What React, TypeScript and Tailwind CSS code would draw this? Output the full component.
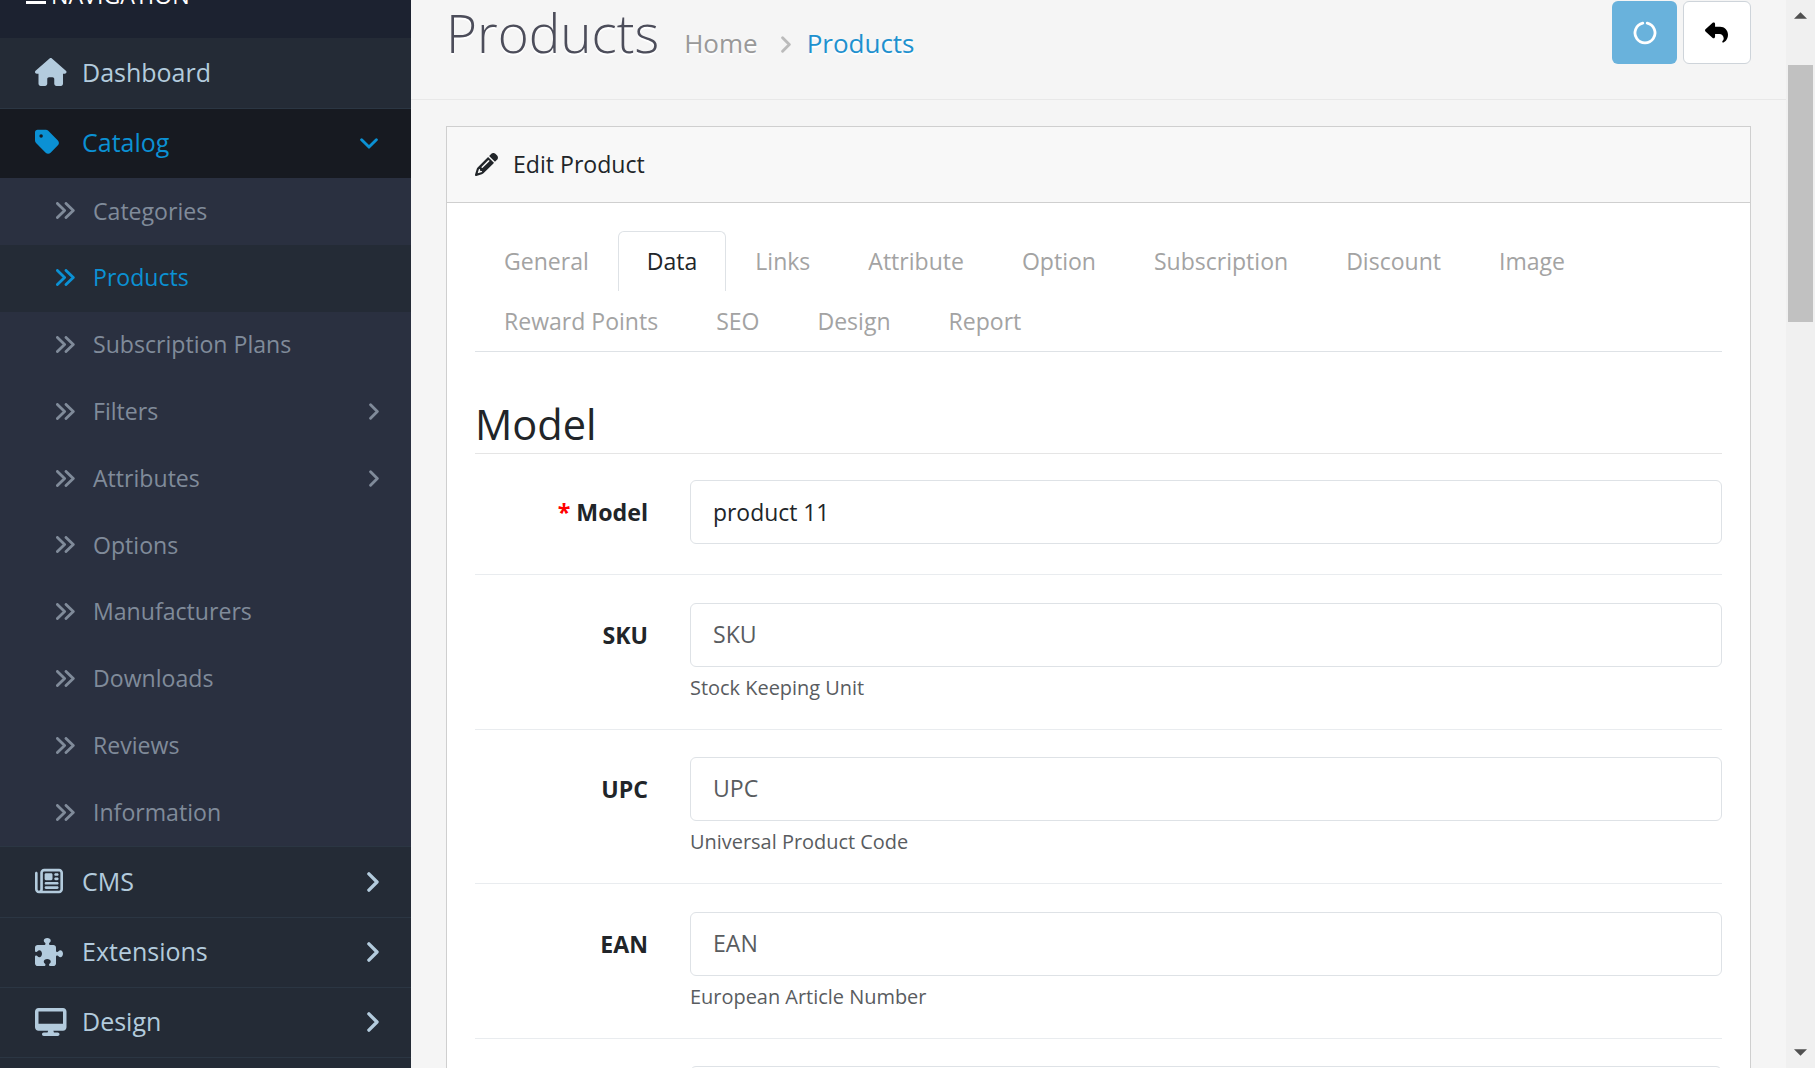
import React from "react";
import { FaHouse, FaTag, FaRegNewspaper, FaPuzzlePiece, FaDesktop, FaPencil, FaReply } from "react-icons/fa6";

function ChevronRight({ className }: { className: string }) {
  return (
    <svg viewBox="0 0 12 20" className={className} fill="none" stroke="currentColor" strokeWidth="3.4" strokeLinejoin="round" strokeLinecap="round">
      <path d="M1.9 1.9 10 10l-8.1 8.1" />
    </svg>
  );
}

function ChevronDown({ className }: { className: string }) {
  return (
    <svg viewBox="0 0 20 12" className={className} fill="none" stroke="currentColor" strokeWidth="3.2" strokeLinejoin="round" strokeLinecap="round">
      <path d="M1.8 1.8 10 10l8.2-8.2" />
    </svg>
  );
}

function DoubleChevron() {
  return (
    <svg viewBox="0 0 19 17" className="h-[17px] w-[19px] shrink-0" fill="none" stroke="currentColor" strokeWidth="2.8" strokeLinejoin="round" strokeLinecap="round">
      <path d="M1.4 1.4 8.6 8.5l-7.2 7.1M10 1.4l7.3 7.1-7.3 7.1" />
    </svg>
  );
}

const children = [
  { label: "Categories" },
  { label: "Products", active: true },
  { label: "Subscription Plans" },
  { label: "Filters", nested: true },
  { label: "Attributes", nested: true },
  { label: "Options" },
  { label: "Manufacturers" },
  { label: "Downloads" },
  { label: "Reviews" },
  { label: "Information" },
];

const tabs = ["General", "Data", "Links", "Attribute", "Option", "Subscription", "Discount", "Image", "Reward Points", "SEO", "Design", "Report"];

const fields = [
  { label: "SKU", help: "Stock Keeping Unit" },
  { label: "UPC", help: "Universal Product Code" },
  { label: "EAN", help: "European Article Number" },
];

const mainRow = "flex items-center border-b border-[#2b3643] pb-[1px] pl-[35px] pr-[32px] text-[25px] text-[#b3cbdd]";

function MainItem({ icon, label, className }: { icon: React.ReactNode; label: string; className: string }) {
  return (
    <li className={className}>
      <span className="-mt-px flex w-[47px] shrink-0">{icon}</span>
      <span className="grow">{label}</span>
      <ChevronRight className="h-[20px] w-[12px]" />
    </li>
  );
}

function Sidebar() {
  return (
    <nav className="flex h-full w-[411px] shrink-0 flex-col overflow-hidden bg-[#242b36]">
      <div className="flex h-[38px] shrink-0 items-start bg-[#1c2230] pl-[26px] text-[23.2px] text-white">
        <span className="mt-px mr-[5px] h-[3px] w-5 bg-white" />
        <span className="-mt-[21px] leading-8">NAVIGATION</span>
      </div>
      <ul className="shrink-0">
        <li className="flex h-[71px] items-center border-b border-[#2b3643] bg-[#242b36] pl-[35px] text-[25px] text-[#b3cbdd]">
          <span className="-mt-[3px] flex w-[47px] shrink-0">
            <FaHouse className="h-[28px] w-[31.5px]" />
          </span>
          Dashboard
        </li>
        <li>
          <div className="flex h-[69px] items-center bg-[#171a21] pb-[1px] pl-[35px] pr-[33px] text-[25px] text-[#0b91d4]">
            <span className="-mt-[3px] flex w-[47px] shrink-0">
              <FaTag className="h-[28px] w-[24.5px]" />
            </span>
            <span className="grow">Catalog</span>
            <ChevronDown className="h-[11px] w-[18px]" />
          </div>
          <ul className="h-[669px] border-b border-[#2b3643] bg-[#2a3040]">
            {children.map((c) => (
              <li
                key={c.label}
                className={
                  "flex h-[66.8px] items-center pb-[1px] pl-[56px] pr-[32px] text-[23.1px] " +
                  (c.active ? "bg-[#242b36] text-[#0b91d4]" : "text-[#808b9a]")
                }
              >
                <DoubleChevron />
                <span className="ml-[18px] grow">{c.label}</span>
                {c.nested && <ChevronRight className="h-[17px] w-[10px]" />}
              </li>
            ))}
          </ul>
        </li>
        <MainItem className={mainRow + " h-[71px]"} icon={<FaRegNewspaper className="size-[28px]" />} label="CMS" />
        <MainItem className={mainRow + " h-[70px]"} icon={<FaPuzzlePiece className="size-[28px]" />} label="Extensions" />
        <MainItem className={mainRow + " h-[70px]"} icon={<FaDesktop className="h-[28px] w-[31.5px]" />} label="Design" />
      </ul>
    </nav>
  );
}

function Header() {
  return (
    <header className="flex h-[100px] shrink-0 items-start border-b border-[#e8e8e8] pl-[35px] pr-[35px] [text-shadow:0_2px_0_#fff]">
      <div className="flex grow items-baseline pt-[3px]">
        <h1 className="text-[53px] leading-[60px] font-light text-[#4c4d5a]">Products</h1>
        <span className="ml-[25px] text-[26px] leading-9 text-[#999]">Home</span>
        <ChevronRight className="mr-[16px] ml-[23px] h-[17px] w-[10px] text-[#bbb]" />
        <span className="text-[26px] leading-9 text-[#1e91cf]">Products</span>
      </div>
      <div className="flex gap-[6px] pt-px">
        <button className="flex h-[63px] w-[65px] items-center justify-center rounded-[6px] bg-[#69b2dc] text-white">
          <svg viewBox="0 0 24 24" className="mt-px ml-px size-6" fill="none" stroke="currentColor" strokeWidth="2.8">
            <path d="M14.2 2.2a10 10 0 1 1-4.4 0" strokeLinecap="round" />
          </svg>
        </button>
        <button className="flex h-[63px] w-[68px] items-center justify-center rounded-[6px] border border-[#ced4da] bg-white pr-[2px] text-black">
          <FaReply className="size-[23px]" />
        </button>
      </div>
    </header>
  );
}

function Field({ label, help }: { label: string; help: string }) {
  return (
    <div className="flex h-[154.7px] border-b border-[#e9ecef] pt-[27.5px]">
      <label className="mr-[42px] w-[173px] pt-[15px] text-right text-[23.1px] leading-[34px] font-bold">{label}</label>
      <div className="grow">
        <input
          placeholder={label}
          className="block h-[64px] w-full rounded-[6px] border border-[#dee2e6] bg-white px-[22px] pb-[1.5px] text-[23.1px] placeholder:text-[#595c5f]"
        />
        <p className="pt-[6px] text-[19.95px] leading-[30px] text-[#595c5f]">{help}</p>
      </div>
    </div>
  );
}

function ProductCard() {
  return (
    <section className="mx-[35px] mt-[26px] border border-[#cfcfcf] bg-white text-[#212529]">
      <div className="flex h-[76px] items-center border-b border-[#cfcfcf] bg-[#f8f8f8] pb-[1px] pl-[28px] text-[23.1px]">
        <FaPencil className="mr-[15px] size-[23px]" />
        Edit Product
      </div>
      <div className="px-[28px] pt-[28px]">
        <ul className="flex h-[121px] flex-wrap content-start border-b border-[#dee2e6] text-[23.04px]">
          {tabs.map((t) => (
            <li
              key={t}
              className={
                "h-[60.3px] px-[28px] pt-[12px] leading-[34px] " +
                (t === "Data"
                  ? "rounded-t-[6px] border-x border-t border-[#dee2e6] text-[#212529]"
                  : "border border-transparent text-[#a3a3a3]")
              }
            >
              {t}
            </li>
          ))}
        </ul>
        <h2 className="mt-[42px] h-[60px] border-b border-[#e5e5e5] text-[41.5px] leading-[60px]">Model</h2>
        <div className="flex h-[121px] border-b border-[#e9ecef] pt-[26px]">
          <label className="mr-[42px] w-[173px] pt-[15px] text-right text-[23.2px] leading-[34px] font-bold">
            <span className="text-[#f00]">* </span>Model
          </label>
          <input
            defaultValue="product 11"
            className="h-[64px] grow rounded-[6px] border border-[#dee2e6] bg-white px-[22px] text-[22.9px]"
          />
        </div>
        {fields.map((f) => (
          <Field key={f.label} label={f.label} help={f.help} />
        ))}
        <div className="flex h-[60px] pt-[27px] pl-[215px]">
          <input className="h-[64px] grow rounded-[6px] border border-[#dee2e6] bg-white" />
        </div>
      </div>
    </section>
  );
}

export default function App() {
  return (
    <div className="flex h-[1068px] w-[1815px] overflow-hidden bg-[#f5f5f5] font-['Open_Sans',sans-serif]">
      <Sidebar />
      <main className="flex min-w-0 grow flex-col overflow-hidden">
        <Header />
        <ProductCard />
      </main>
      <div className="flex w-[29px] shrink-0 flex-col items-center bg-[#f0f0f0] pt-[12px] pb-[12px]">
        <svg viewBox="0 0 14 7" className="h-[7px] w-[13px] shrink-0 fill-[#505050]">
          <path d="M0 7 7 0l7 7z" />
        </svg>
        <div className="mt-[46px] mr-[1px] h-[257px] w-[25px] shrink-0 bg-[#c1c1c1]" />
        <div className="grow" />
        <svg viewBox="0 0 14 7" className="h-[7px] w-[13px] shrink-0 fill-[#505050]">
          <path d="M0 0l7 7 7-7z" />
        </svg>
      </div>
    </div>
  );
}
